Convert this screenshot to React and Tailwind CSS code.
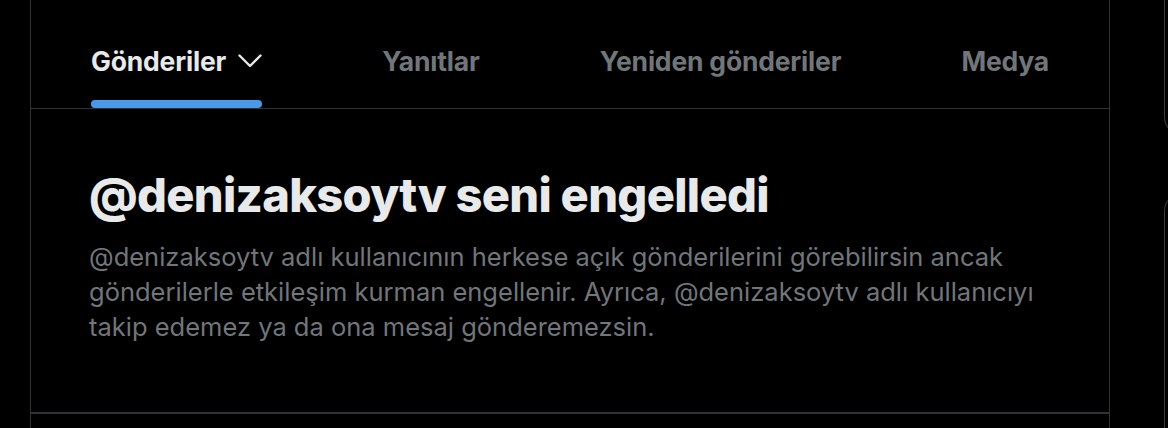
const TABS = [
  { label: 'Gönderiler', active: true, chevron: true },
  { label: 'Yanıtlar' },
  { label: 'Yeniden gönderiler' },
  { label: 'Medya' },
];

const FONT = { fontFamily: 'Inter, "Noto Sans", sans-serif' };

function Chevron() {
  return (
    <svg width="24" height="14" viewBox="0 0 24 14" fill="none" aria-hidden="true">
      <path d="M1.5 1.5 L12 12 L22.5 1.5" stroke="currentColor" strokeWidth="2.4" strokeLinecap="round" strokeLinejoin="round" />
    </svg>
  );
}

export default function App() {
  return (
    <div className="flex h-[428px] w-[1168px] overflow-hidden bg-black pl-[30px]" style={FONT}>
      <div className="flex w-[1080px] flex-shrink-0 flex-col border-x border-[#2f3336]">
        <nav className="flex h-[109px] border-b border-[#2f3336]">
          {TABS.map((tab) => (
            <div key={tab.label} className="flex flex-grow justify-center">
              <div className="flex h-full flex-col">
                <div
                  className={`mt-[45px] flex items-center gap-[12px] text-[26.5px] font-bold leading-[32px] tracking-[-0.2px] ${
                    tab.active ? 'text-[#e7e9ea]' : 'text-[#71767b]'
                  }`}
                >
                  {tab.label}
                  {tab.chevron && <Chevron />}
                </div>
                {tab.active && <div className="mt-auto h-[8px] rounded-full bg-[#4a99e9]" />}
              </div>
            </div>
          ))}
        </nav>

        <section className="flex-1 border-b-2 border-[#2f3336] pl-[58px] pt-[59px]">
          <h2 className="text-[47px] font-extrabold leading-[54px] tracking-[-0.7px] text-[#e7e9ea]">
            @denizaksoytv seni engelledi
          </h2>
          <p className="mt-[17px] whitespace-nowrap text-[25.5px] leading-[35px] text-[#71767b]">
            @denizaksoytv adlı kullanıcının herkese açık gönderilerini görebilirsin ancak
            <br />
            gönderilerle etkileşim kurman engellenir. Ayrıca, @denizaksoytv adlı kullanıcıyı
            <br />
            takip edemez ya da ona mesaj gönderemezsin.
          </p>
        </section>
        <div className="h-[14px]" />
      </div>

      <div className="ml-auto flex w-[4px] flex-shrink-0 flex-col">
        <div className="-mt-[20px] h-[155px] w-[40px] flex-shrink-0 rounded-bl-[18px] border-b border-l border-[#3a3d40]" />
        <div className="mt-[58px] w-[40px] flex-1 rounded-tl-[18px] border-l border-t border-[#3a3d40]" />
      </div>
    </div>
  );
}
